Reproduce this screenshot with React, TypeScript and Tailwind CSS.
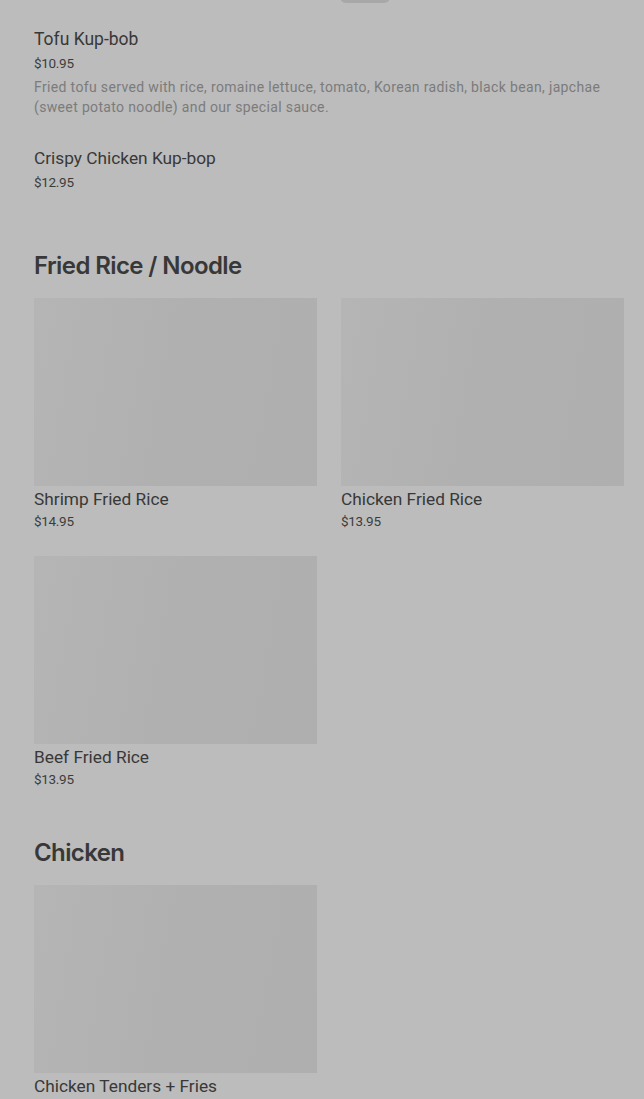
import React from "react";

const font = { fontFamily: "Inter, 'Noto Sans', sans-serif" };
const roboto = { fontFamily: "Roboto, 'Noto Sans', sans-serif" };

function Card({ name, price }: { name: string; price?: string }) {
  return (
    <div className="flex flex-col">
      <div className="h-[188px] w-[283px] bg-linear-[100deg] from-[#b5b5b5] via-[#b0b0b0] to-[#afafaf]" />
      <div className="mt-[1px] text-[17.3px] leading-[24px] text-[#383838]" style={roboto}>
        {name}
      </div>
      {price && (
        <div className="text-[13.5px] leading-[20px] tracking-[-0.3px] text-[#3c3c3c]" style={roboto}>
          {price}
        </div>
      )}
    </div>
  );
}

export default function App() {
  return (
    <div className="min-h-[1099px] w-full overflow-hidden bg-[#bcbcbc]" style={font}>
      <div className="ml-[340px] -mt-[9px] h-[12px] w-[50px] rounded-full bg-[#a8a8a8]" />
      <div className="px-[34px] pt-[24px]" style={roboto}>
        <div className="text-[17.5px] leading-[24px] text-[#383838]">Tofu Kup-bob</div>
        <div className="mt-[2px] text-[13.5px] leading-[20px] tracking-[-0.3px] text-[#3c3c3c]">$10.95</div>
        <div className="mt-[4px] text-[14px] leading-[20px] tracking-[0.35px] text-[#7b7b7b]">
          Fried tofu served with rice, romaine lettuce, tomato, Korean radish, black bean, japchae (sweet potato noodle) and our special sauce.
        </div>
        <div className="mt-[29px] text-[17.3px] leading-[24px] text-[#383838]">Crispy Chicken Kup-bop</div>
        <div className="mt-[2px] text-[13.5px] leading-[20px] tracking-[-0.3px] text-[#3c3c3c]">$12.95</div>
      </div>

      <div className="px-[34px] mt-[58px]">
        <h2 className="text-[24px] font-semibold leading-[32px] tracking-[-0.6px] text-[#383838]" style={font}>
          Fried Rice / Noodle
        </h2>
        <div className="mt-[16px] grid grid-cols-[283px_283px] gap-x-[24px] gap-y-[25px]">
          <Card name="Shrimp Fried Rice" price="$14.95" />
          <Card name="Chicken Fried Rice" price="$13.95" />
          <Card name="Beef Fried Rice" price="$13.95" />
        </div>
      </div>

      <div className="px-[34px] mt-[48px]">
        <h2 className="text-[24px] font-semibold leading-[32px] tracking-[-0.6px] text-[#383838]" style={font}>
          Chicken
        </h2>
        <div className="mt-[16px] grid grid-cols-[283px_283px] gap-x-[24px]">
          <Card name="Chicken Tenders + Fries" />
        </div>
      </div>
    </div>
  );
}
